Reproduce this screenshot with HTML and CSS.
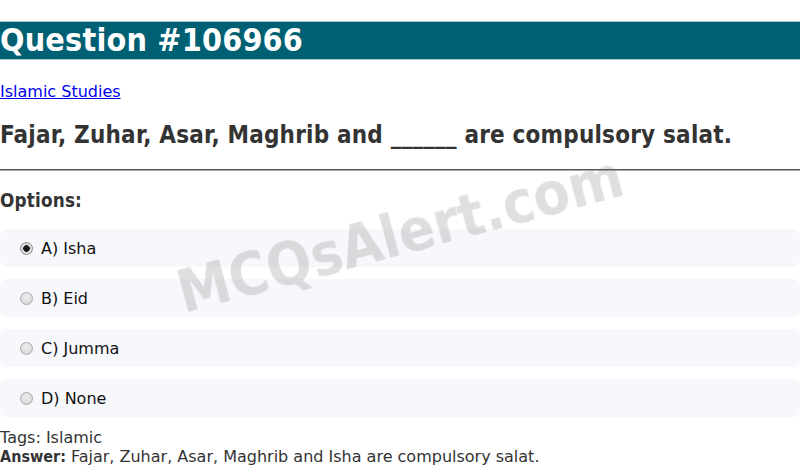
FILE: index.html
```html
<!DOCTYPE html>
<html lang="en">
<head>
<meta charset="utf-8">
<title>Question #106966</title>
<link rel="stylesheet" href="styles.css">
</head>
<body>
<h1 class="title">Question #106966</h1>
<p class="cat"><a href="#">Islamic Studies</a></p>
<h2 class="question">Fajar, Zuhar, Asar, Maghrib and ______ are compulsory salat.</h2>
<hr class="rule">
<h3 class="opts-title">Options:</h3>
<div class="options">
  <label class="option"><input type="radio" name="q" checked><span>A) Isha</span></label>
  <label class="option"><input type="radio" name="q"><span>B) Eid</span></label>
  <label class="option"><input type="radio" name="q"><span>C) Jumma</span></label>
  <label class="option"><input type="radio" name="q"><span>D) None</span></label>
</div>
<div class="meta">
  <div>Tags: Islamic</div>
  <div><b>Answer:</b> Fajar, Zuhar, Asar, Maghrib and Isha are compulsory salat.</div>
</div>
<div class="watermark">MCQsAlert.com</div>
</body>
</html>
```
FILE: styles.css
```css
html, body {
  margin: 0;
  padding: 0;
  background: #fff;
}
body {
  font-family: "DejaVu Sans", Verdana, sans-serif;
  font-size: 16px;
  color: #333;
}
.title,
.question,
.opts-title,
.meta b,
.watermark {
  font-family: "DejaVu Sans Condensed", "DejaVu Sans", sans-serif;
  font-stretch: condensed;
  letter-spacing: 0.2px;
}
.title {
  font-size: 32px;
  font-weight: bold;
  margin: 22px 0 21px;
  background: #006073;
  color: #fff;
  line-height: 37px;
  box-shadow: 0 1px 0 #a9cbd3, 0 -1px 0 #a9cbd3;
}
.cat {
  margin: 23px 0 0;
}
.cat a {
  color: #0000ee;
}
.question {
  font-size: 24px;
  font-weight: bold;
  margin: 19.92px 0;
  color: #333;
}
.rule {
  margin: 0;
  border: 0;
  border-top: 1px solid #555;
  border-bottom: 1px solid #aaa;
}
.opts-title {
  font-size: 18.72px;
  margin: 18.72px 0;
  color: #333;
}
.options {
  display: flex;
  flex-direction: column;
  gap: 12px;
}
.option {
  display: flex;
  align-items: center;
  height: 38px;
  padding: 0 0 0 20px;
  background: #f7f8fc;
  border-radius: 7px;
  color: #111;
}
.option input {
  appearance: none;
  -webkit-appearance: none;
  box-sizing: border-box;
  margin: 0 8px 0 0;
  width: 13px;
  height: 13px;
  border-radius: 50%;
  border: 1px solid #a8a8a8;
  background: radial-gradient(circle at 50% 35%, #eeeeee 0%, #d4d4d4 100%);
}
.option input:checked {
  background: radial-gradient(circle, #1a1a1a 0, #1a1a1a 3px, #d8d8d8 3.6px, #e4e4e4 100%);
  border-color: #8a8a8a;
}
.meta {
  margin-top: 11px;
  line-height: 19px;
  color: #333;
}
.meta b {
  color: #333;
  letter-spacing: 0;
}
.watermark {
  position: fixed;
  left: 50%;
  top: 50%;
  transform: translate(-50%, -50%) rotate(-15deg);
  font-size: 59px;
  font-weight: bold;
  color: rgba(120, 120, 120, 0.24);
  white-space: nowrap;
  pointer-events: none;
  letter-spacing: 0;
}
```
